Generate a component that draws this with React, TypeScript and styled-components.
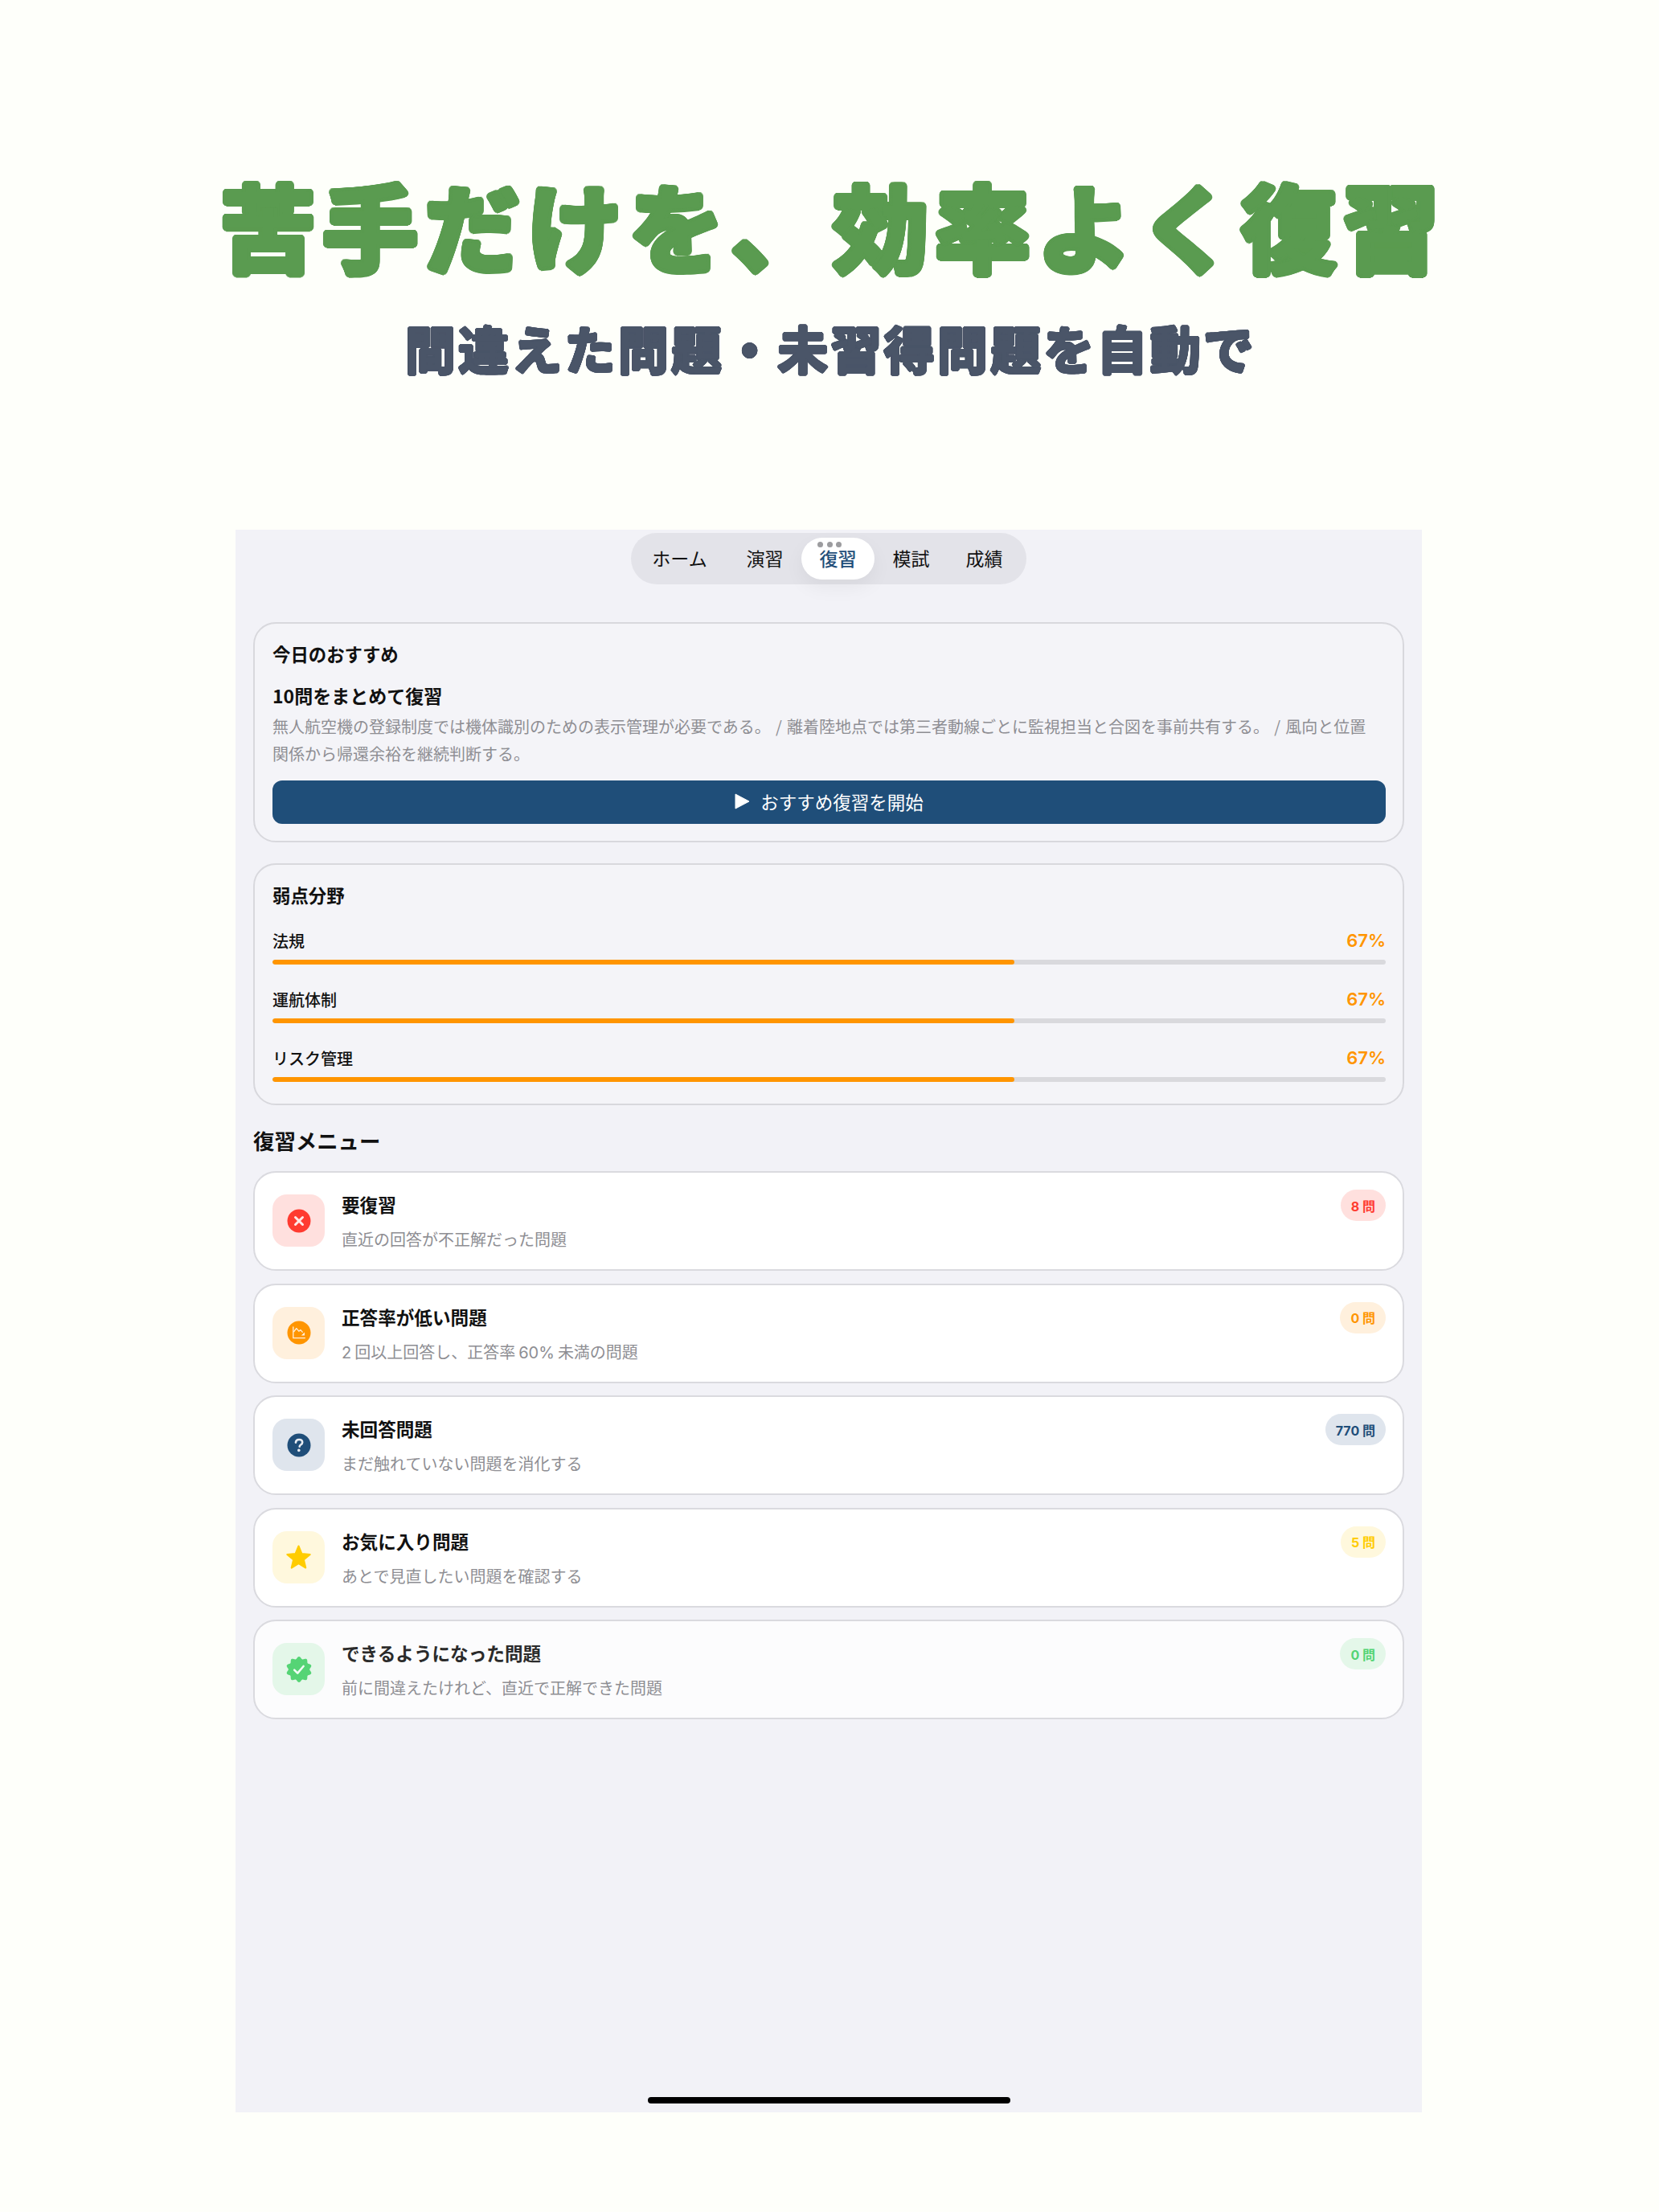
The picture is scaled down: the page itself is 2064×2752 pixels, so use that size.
import React from "react";
import styled, { createGlobalStyle } from "styled-components";

const GlobalStyle = createGlobalStyle`
  html, body {
    margin: 0;
    padding: 0;
    background: #fefffa;
  }
  body {
    font-family: "Noto Sans CJK JP", "Noto Sans", sans-serif;
    color: #111;
  }
`;

// round outline for the fat heading lettering, -webkit-text-stroke leaves sharp corners
const ring = (r: number, color: string) =>
  Array.from({ length: 24 }, (_, i) => {
    const a = (i / 24) * Math.PI * 2;
    return `${(r * Math.cos(a)).toFixed(2)}px ${(r * Math.sin(a)).toFixed(2)}px 0 ${color}`;
  }).join(", ");

const Page = styled.div`
  width: 2064px;
  height: 2752px;
  overflow: hidden;
`;

const Header = styled.header`
  height: 659px;
  box-sizing: border-box;
  padding-top: 209px;
  display: flex;
  flex-direction: column;
  align-items: center;
`;

const Title = styled.h1`
  margin: 0;
  padding-left: 9px;
  font-size: 118px;
  line-height: 140px;
  letter-spacing: 9px;
  font-weight: 700;
  color: #5a9b50;
  white-space: nowrap;
  text-shadow: ${ring(4.5, "#5a9b50")};
`;

const Subtitle = styled.h2`
  margin: 43px 0 0;
  padding-left: 3px;
  font-size: 63px;
  line-height: 80px;
  letter-spacing: 3.2px;
  font-weight: 700;
  color: #4a5568;
  white-space: nowrap;
  text-shadow: ${ring(1.7, "#4a5568")};
`;

const Screen = styled.main`
  position: relative;
  width: 1476px;
  height: 1969px;
  margin-left: 293px;
  box-sizing: border-box;
  padding: 4px 22px 0;
  background: #f2f2f7;
`;

const TabBar = styled.nav`
  width: 492px;
  height: 64px;
  margin: 0 auto 47px;
  box-sizing: border-box;
  padding: 6px 7px 6px 0;
  border-radius: 32px;
  background: #e3e3e9;
  display: flex;
  align-items: stretch;
`;

const Tab = styled.div<{ $active?: boolean; $wide?: boolean }>`
  position: relative;
  width: 91px;
  flex: ${(p) => (p.$wide ? "1" : "none")};
  box-sizing: border-box;
  padding-bottom: 2px;
  border-radius: 26px;
  display: flex;
  align-items: center;
  justify-content: center;
  font-size: 23px;
  line-height: 50px;
  font-weight: ${(p) => (p.$active ? 500 : 400)};
  color: ${(p) => (p.$active ? "#1f4e79" : "#111")};
  background: ${(p) => (p.$active ? "#fff" : "transparent")};
  box-shadow: ${(p) => (p.$active ? "0 10px 24px rgba(0,0,0,0.05)" : "none")};
`;

const Dots = styled.span`
  position: absolute;
  top: 5px;
  left: 20px;
  display: flex;
  gap: 4.5px;

  i {
    width: 7px;
    height: 7px;
    border-radius: 50%;
    background: #9c9c9f;
  }
`;

const Card = styled.section<{ $bottom: number; $gap: number }>`
  box-sizing: border-box;
  margin-bottom: ${(p) => p.$gap}px;
  padding: 22px 21px ${(p) => p.$bottom}px 22px;
  border: 2px solid #d8d8dd;
  border-radius: 28px;
  background: #f4f4f8;
`;

const CardTitle = styled.h3`
  margin: 0;
  padding-bottom: 2px;
  font-size: 22.4px;
  line-height: 30px;
  font-weight: 700;
  color: #111;
`;

const LeadTitle = styled.div`
  margin-top: 20px;
  font-size: 23px;
  line-height: 30px;
  font-weight: 700;
`;

const Description = styled.p`
  margin: 7px 0 16px;
  font-size: 20px;
  line-height: 34px;
  word-spacing: 1.7px;
  color: #8e8e93;
`;

const StartButton = styled.button`
  width: 100%;
  height: 54px;
  padding: 0 0 3px;
  border: 0;
  border-radius: 12px;
  background: #1f4e79;
  color: #fff;
  font-family: inherit;
  font-size: 22.5px;
  display: flex;
  align-items: center;
  justify-content: center;
  gap: 13px;
`;

const Row = styled.div`
  margin-top: 25px;

  & + & {
    margin-top: 28px;
  }
`;

const RowHead = styled.div`
  display: flex;
  justify-content: space-between;
  align-items: center;
  height: 30px;
  margin-bottom: 9px;
`;

const RowLabel = styled.span`
  font-size: 20px;
  font-weight: 500;
`;

const RowValue = styled.span`
  font-family: Inter, sans-serif;
  font-size: 22px;
  font-weight: 600;
  color: #ff9500;
`;

const Track = styled.div`
  height: 6px;
  border-radius: 3px;
  background: #d9d9dd;
  overflow: hidden;
`;

const Fill = styled.div`
  height: 100%;
  border-radius: 3px;
  background: #ff9500;
`;

const SectionHeading = styled.h2`
  margin: -2px 0 20px;
  font-size: 26.4px;
  line-height: 36px;
  font-weight: 700;
  color: #111;
`;

const MenuList = styled.div`
  display: flex;
  flex-direction: column;
  gap: 15.6px;
`;

const MenuCard = styled.div<{ $muted?: boolean }>`
  height: 124px;
  box-sizing: border-box;
  padding: 21px 21px 0 22px;
  border: 2px solid #dadadf;
  border-radius: 28px;
  background: ${(p) => (p.$muted ? "#fcfcfd" : "#fff")};
  display: flex;
  align-items: flex-start;
`;

const IconTile = styled.div<{ $bg: string }>`
  width: 65px;
  height: 65px;
  margin-top: 6px;
  flex: none;
  border-radius: 18px;
  background: ${(p) => p.$bg};
  display: flex;
  align-items: center;
  justify-content: center;
`;

const MenuText = styled.div`
  flex: 1;
  margin: 4px 0 0 21px;
  display: flex;
  flex-direction: column;
  gap: 13px;
`;

const MenuTitle = styled.div<{ $muted?: boolean }>`
  font-size: 22.6px;
  line-height: 30px;
  font-weight: 700;
  color: ${(p) => (p.$muted ? "#2b2b2b" : "#111")};
`;

const MenuSub = styled.div`
  font-size: 20px;
  line-height: 30px;
  color: #8e8e93;
`;

const Num = styled.span`
  margin: 0 4px;
  font-family: Inter, sans-serif;

  &:first-child {
    margin-left: 0;
  }
`;

const Badge = styled.span<{ $bg: string; $fg: string }>`
  height: 39px;
  min-width: 56px;
  box-sizing: border-box;
  padding: 0 13px;
  border-radius: 20px;
  background: ${(p) => p.$bg};
  color: ${(p) => p.$fg};
  font-family: Inter, "Noto Sans CJK JP", sans-serif;
  font-size: 16px;
  font-weight: 700;
  display: flex;
  align-items: center;
  justify-content: center;
`;

const HomeBar = styled.div`
  position: absolute;
  left: 513px;
  bottom: 11px;
  width: 451px;
  height: 8px;
  border-radius: 4px;
  background: #000;
`;

const CrossIcon = () => (
  <svg width="30" height="30" viewBox="0 0 30 30">
    <circle cx="15" cy="15" r="14.5" fill="#ff3b30" />
    <path d="M10.5 10.5l9 9M19.5 10.5l-9 9" stroke="#ffe9e7" strokeWidth="3" strokeLinecap="round" />
  </svg>
);

const ChartIcon = () => (
  <svg width="30" height="30" viewBox="0 0 30 30">
    <circle cx="15" cy="15" r="14.5" fill="#ff9500" />
    <path d="M7.8 8v13.6h14.6" fill="none" stroke="#fff0dd" strokeWidth="1.3" strokeLinecap="round" />
    <path d="M8.4 14l3.4-4.4 3 3.6 2.2-1.6 2.6 3" fill="none" stroke="#fff0dd" strokeWidth="1.3" strokeLinejoin="round" />
    <path d="M22 14.4v4.2h-4.2z" fill="#fff0dd" />
  </svg>
);

const QuestionIcon = () => (
  <svg width="30" height="30" viewBox="0 0 30 30">
    <circle cx="15" cy="15" r="14.5" fill="#1f4e79" />
    <path d="M10.9 11.6c.2-2.4 1.9-3.6 4.2-3.6 2.4 0 4.1 1.3 4.1 3.4 0 1.5-.8 2.3-2 3.1-1.1.7-1.5 1.2-1.5 2.3" fill="none" stroke="#e6ebf1" strokeWidth="2.6" strokeLinecap="round" />
    <circle cx="14.8" cy="21.4" r="1.8" fill="#e6ebf1" />
  </svg>
);

const StarIcon = () => (
  <svg width="33" height="32" viewBox="0 0 33 32">
    <path
      d="M16.5 2.5l4 9.6 10.2.8-7.8 6.7 2.4 10-8.8-5.4-8.8 5.4 2.4-10-7.8-6.7 10.2-.8z"
      fill="#ffcc00"
      stroke="#ffcc00"
      strokeWidth="2"
      strokeLinejoin="round"
    />
  </svg>
);

// scalloped badge outline, 10 lobes
const sealPoints = Array.from({ length: 120 }, (_, i) => {
  const a = (i / 120) * Math.PI * 2;
  const r = 14.6 + 1.4 * Math.cos(a * 10);
  return `${(16 + r * Math.sin(a)).toFixed(2)},${(16 - r * Math.cos(a)).toFixed(2)}`;
}).join(" ");

const SealIcon = () => (
  <svg width="32" height="32" viewBox="0 0 32 32">
    <polygon points={sealPoints} fill="#55d475" />
    <path d="M10.2 16.6l4 4 7.4-8.6" fill="none" stroke="#f2fcf5" strokeWidth="2.6" strokeLinecap="round" strokeLinejoin="round" />
  </svg>
);

const PlayIcon = () => (
  <svg width="19" height="20" viewBox="0 0 19 20">
    <path d="M1 1v18l17-9z" fill="#fff" stroke="#fff" strokeWidth="1" strokeLinejoin="round" />
  </svg>
);

const weakAreas = ["法規", "運航体制", "リスク管理"];

const menuItems = [
  { title: "要復習", sub: "直近の回答が不正解だった問題", count: "8 問", bg: "#ffe0de", fg: "#ff3b30", icon: <CrossIcon /> },
  {
    title: "正答率が低い問題",
    sub: (
      <>
        <Num>2</Num>回以上回答し、正答率<Num>60%</Num>未満の問題
      </>
    ),
    count: "0 問",
    bg: "#fff0dd",
    fg: "#ff9500",
    icon: <ChartIcon />,
  },
  { title: "未回答問題", sub: "まだ触れていない問題を消化する", count: "770 問", bg: "#dfe5ed", fg: "#1f4e79", icon: <QuestionIcon /> },
  { title: "お気に入り問題", sub: "あとで見直したい問題を確認する", count: "5 問", bg: "#fff8dd", fg: "#ffcc00", icon: <StarIcon /> },
  { title: "できるようになった問題", sub: "前に間違えたけれど、直近で正解できた問題", count: "0 問", bg: "#e4f7e9", fg: "#55d475", icon: <SealIcon />, muted: true },
];

const App = () => {
  return (
    <Page>
      <GlobalStyle />
      <Header>
        <Title>苦手だけを、効率よく復習</Title>
        <Subtitle>間違えた問題・未習得問題を自動で</Subtitle>
      </Header>
      <Screen>
        <TabBar>
          <Tab $wide>ホーム</Tab>
          <Tab>演習</Tab>
          <Tab $active>
            <Dots>
              <i />
              <i />
              <i />
            </Dots>
            復習
          </Tab>
          <Tab>模試</Tab>
          <Tab>成績</Tab>
        </TabBar>

        <Card $bottom={21} $gap={26}>
          <CardTitle>今日のおすすめ</CardTitle>
          <LeadTitle>10問をまとめて復習</LeadTitle>
          <Description>
            無人航空機の登録制度では機体識別のための表示管理が必要である。 / 離着陸地点では第三者動線ごとに監視担当と合図を事前共有する。 / 風向と位置
            <br />
            関係から帰還余裕を継続判断する。
          </Description>
          <StartButton>
            <PlayIcon />
            おすすめ復習を開始
          </StartButton>
        </Card>

        <Card $bottom={27} $gap={28}>
          <CardTitle>弱点分野</CardTitle>
          {weakAreas.map((name) => (
            <Row key={name}>
              <RowHead>
                <RowLabel>{name}</RowLabel>
                <RowValue>67%</RowValue>
              </RowHead>
              <Track>
                <Fill style={{ width: "66.67%" }} />
              </Track>
            </Row>
          ))}
        </Card>

        <SectionHeading>復習メニュー</SectionHeading>
        <MenuList>
          {menuItems.map((item) => (
            <MenuCard key={item.title} $muted={item.muted}>
              <IconTile $bg={item.bg}>{item.icon}</IconTile>
              <MenuText>
                <MenuTitle $muted={item.muted}>{item.title}</MenuTitle>
                <MenuSub>{item.sub}</MenuSub>
              </MenuText>
              <Badge $bg={item.bg} $fg={item.fg}>
                {item.count}
              </Badge>
            </MenuCard>
          ))}
        </MenuList>
        <HomeBar />
      </Screen>
    </Page>
  );
};

export default App;
